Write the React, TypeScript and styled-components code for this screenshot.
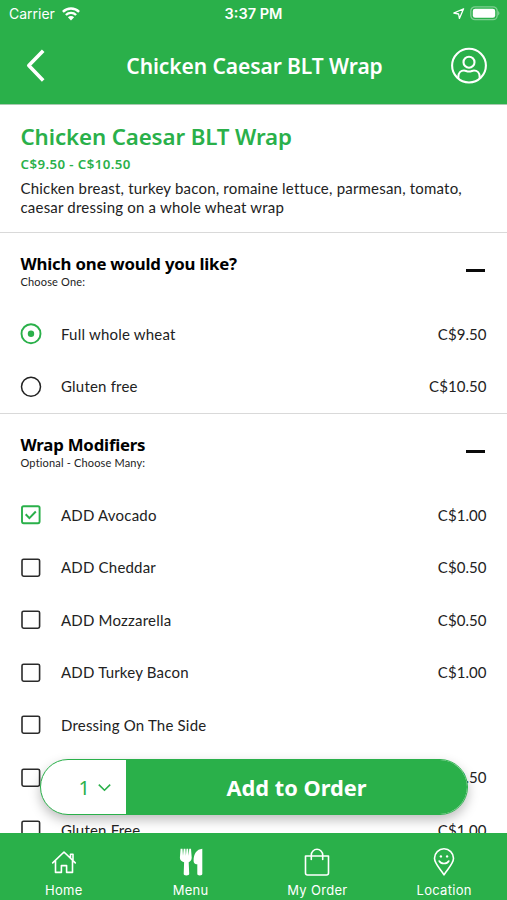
import React from 'react';
import styled, { createGlobalStyle } from 'styled-components';

const GREEN = '#2ab04a';
const BODY = 'Lato, "Noto Sans", sans-serif';
const HEADING = '"Noto Sans", "Open Sans", sans-serif';
const SYSTEM = 'Inter, "Liberation Sans", sans-serif';

const Global = createGlobalStyle`
  *, *::before, *::after { box-sizing: border-box; }
  body { margin: 0; background: #fff; }
  button { border: 0; padding: 0; background: none; color: inherit; font: inherit; }
  svg { display: block; flex: none; }
`;

const Screen = styled.div`
  position: relative;
  display: flex;
  flex-direction: column;
  width: 507px;
  height: 900px;
  overflow: hidden;
  background: #fff;
  color: #222;
  font-family: ${BODY};
`;

const Header = styled.header`
  flex: none;
  height: 105px;
  background: ${GREEN};
  border-bottom: 1px solid #a9c9b0;
  color: #fff;
`;

const StatusBar = styled.div`
  display: grid;
  grid-template-columns: 1fr auto 1fr;
  align-items: center;
  height: 27px;
  padding: 0 7px 0 9px;
  font-family: ${SYSTEM};
  font-size: 14px;
`;

const Carrier = styled.div`
  display: flex;
  align-items: center;
  gap: 7px;
`;

const Clock = styled.time`
  margin-right: 2px;
  font-weight: 600;
  font-size: 14.5px;
`;

const Indicators = styled.div`
  display: flex;
  align-items: center;
  justify-content: flex-end;
  gap: 5px;
`;

const NavBar = styled.div`
  display: grid;
  grid-template-columns: 44px 1fr 44px;
  align-items: center;
  height: 77px;
  padding: 0 16px 0 14px;
`;

const NavTitle = styled.h1`
  margin: 0 0 0 4px;
  text-align: center;
  font: 600 21px/28px ${HEADING};
  letter-spacing: -0.08px;
`;

const NavButton = styled.button`
  display: grid;
  place-items: center;
  width: 44px;
  height: 44px;
`;

const Content = styled.main`
  flex: 1;
  min-height: 0;
  overflow: hidden;
`;

const Intro = styled.section`
  height: 128px;
  padding: 17px 20px 0 20.5px;
  border-bottom: 1px solid #d9d9d9;
`;

const ItemName = styled.h2`
  margin: 0;
  color: ${GREEN};
  font: 600 22.3px/29px ${HEADING};
  letter-spacing: -0.12px;
`;

const PriceRange = styled.p`
  margin: 3px 0 5px;
  color: ${GREEN};
  font: 600 13.3px/20px ${HEADING};
  letter-spacing: 0.4px;
`;

const Description = styled.p`
  margin: 0;
  width: 450px;
  font-size: 15px;
  line-height: 19px;
  letter-spacing: 0.2px;
`;

const Group = styled.section`
  border-bottom: 1px solid #d9d9d9;
`;

const GroupHeader = styled.div`
  display: flex;
  justify-content: space-between;
  height: 75px;
  padding: 19px 22.5px 0 20.5px;
`;

const GroupTitle = styled.h3`
  margin: 0;
  color: #000;
  font: 700 16.8px/23px ${HEADING};
  letter-spacing: -0.2px;
`;

const GroupHint = styled.p`
  margin: 0;
  font-size: 11px;
  line-height: 13px;
  letter-spacing: 0.17px;
`;

const Collapse = styled.button`
  width: 19px;
  height: 3px;
  margin-top: 17px;
  background: #0a0a0a;
`;

const Row = styled.label`
  display: flex;
  align-items: center;
  height: 52.5px;
  padding: 0 20.5px 0 20px;
  font-size: 15px;
  letter-spacing: 0.2px;
`;

const Name = styled.span`
  flex: 1;
  padding: 0 0 1px 19px;
`;

const Price = styled.span`
  padding-bottom: 1px;
  letter-spacing: 0.05px;
`;

const OrderBar = styled.div`
  position: absolute;
  left: 40px;
  top: 759px;
  display: flex;
  width: 428px;
  height: 56px;
  overflow: hidden;
  border: 1px solid ${GREEN};
  border-radius: 28px;
  background: #fff;
  box-shadow: 0 5px 12px rgba(0, 0, 0, 0.26);
`;

const Quantity = styled.button`
  display: flex;
  align-items: center;
  justify-content: flex-end;
  gap: 8px;
  width: 85px;
  padding: 1px 15px 0 0;
  color: ${GREEN};
  font-family: ${HEADING};
  font-size: 20px;
`;

const AddButton = styled.button`
  flex: 1;
  padding-top: 1px;
  background: ${GREEN};
  color: #fff;
  font: 700 21.8px/30px ${HEADING};
`;

const TabBar = styled.nav`
  position: relative;
  flex: none;
  display: grid;
  grid-template-columns: repeat(4, 1fr);
  height: 67px;
  background: ${GREEN};
  color: #fff;
`;

const Tab = styled.a`
  display: flex;
  flex-direction: column;
  align-items: center;
  padding: 14px 0 0 1px;
  font: 400 13px/18px ${SYSTEM};
  letter-spacing: 0.3px;
`;

const TabIcon = styled.span`
  display: grid;
  place-items: center;
  height: 30px;
  margin-bottom: 4px;
`;

function RadioMark({ on }: { on?: boolean }) {
  return (
    <svg width="22" height="22" viewBox="0 0 22 22" fill="none">
      <circle cx="11" cy="10.7" r="9.5" stroke={on ? GREEN : '#222'} strokeWidth={on ? 1.9 : 1.5} />
      {on && <circle cx="11" cy="10.7" r="3.2" fill={GREEN} />}
    </svg>
  );
}

function CheckMark({ on }: { on?: boolean }) {
  return (
    <svg width="22" height="22" viewBox="0 0 22 22" fill="none" stroke={on ? GREEN : '#2b2b2b'}>
      <rect x="2" y="2.2" width="17.6" height="17" rx="1.6" strokeWidth={on ? 1.9 : 1.6} />
      {on && <path d="M5.7 10.2l3.7 3.9 6.4-6.6" strokeWidth="2" />}
    </svg>
  );
}

const wraps = [
  { name: 'Full whole wheat', price: 'C$9.50', on: true },
  { name: 'Gluten free', price: 'C$10.50' },
];

const modifiers = [
  { name: 'ADD Avocado', price: 'C$1.00', on: true },
  { name: 'ADD Cheddar', price: 'C$0.50' },
  { name: 'ADD Mozzarella', price: 'C$0.50' },
  { name: 'ADD Turkey Bacon', price: 'C$1.00' },
  { name: 'Dressing On The Side', price: '' },
  { name: '', price: 'C$0.50' },
  { name: 'Gluten Free', price: 'C$1.00' },
];

const line = { fill: 'none', stroke: '#fff', strokeWidth: 1.6 };

const tabs = [
  {
    label: 'Home',
    icon: (
      <svg width="26" height="26" viewBox="0 0 26 26" {...line} strokeLinejoin="round" strokeLinecap="round">
        <path d="M1.7 13.9L13 3l11.3 10.9M4.5 11.5V23.4h5.900v-6.800h5.200v6.800h5.900V11.500M19.500 9V5.200h2.500v6" />
      </svg>
    ),
  },
  {
    label: 'Menu',
    icon: (
      <svg width="24" height="28" viewBox="0 0 24 28" fill="#fff">
        <path d="M1.600.8h1.900l.5 7 .7-7h1.700l.5 7 .6-7h1.600l.6 7 .5-7h1.800l.7 8.700c0 2.400-1.200 3.900-3 4.700l.5 11.600c0 1-.9 1.700-2.800 1.700s-2.700-.7-2.700-1.700l.4-11.600C2.300 13.400.9 11.900.9 9.500z" />
        <path d="M23.300.8v25c0 1.200-.8 1.700-2.500 1.700s-2.500-.6-2.500-1.700v-9.600h-1.200c-1.700-.2-2.500-1.500-2.500-3.600 0-6.700 3.100-11.300 8.700-11.800z" />
      </svg>
    ),
  },
  {
    label: 'My Order',
    icon: (
      <svg width="26" height="28" viewBox="0 0 26 28" {...line}>
        <path d="M1.500 8h23v17a2 2 0 0 1-2 2h-19a2 2 0 0 1-2-2z" strokeLinejoin="round" />
        <path d="M7.300 11.500V7a5.700 5.700 0 0 1 11.400 0v4.500" strokeLinecap="round" />
      </svg>
    ),
  },
  {
    label: 'Location',
    icon: (
      <svg width="24" height="28" viewBox="0 0 24 28" {...line}>
        <path d="M12 26.800C9 21.500 2.500 16 2.500 10.300a9.500 9.500 0 0 1 19 0C21.500 16 15 21.500 12 26.800z" strokeLinejoin="round" />
        <path d="M7.200 13c1.900 3.400 7.700 3.400 9.600 0" strokeLinecap="round" />
        <circle cx="8.900" cy="8.400" r="1.200" fill="#fff" stroke="none" />
        <circle cx="15.100" cy="8.400" r="1.200" fill="#fff" stroke="none" />
      </svg>
    ),
  },
];

export default function App() {
  return (
    <Screen>
      <Global />
      <Header>
        <StatusBar>
          <Carrier>
            Carrier
            <svg width="18" height="14" viewBox="0 0 18 14" fill="none" stroke="#fff" strokeWidth="2.400">
              <path d="M.9 4.900a11.500 11.500 0 0 1 16.200 0M3.900 8a7.300 7.300 0 0 1 10.200 0" />
              <path d="M9 13.500L5.900 10.300a4.400 4.400 0 0 1 6.200 0z" fill="#fff" stroke="none" />
            </svg>
          </Carrier>
          <Clock>3:37 PM</Clock>
          <Indicators>
            <svg width="13" height="13" viewBox="0 0 13 13" fill="none" stroke="#fff" strokeWidth="1.300" strokeLinejoin="round">
              <path d="M11.600 1.800L1.800 6l4.800 1 .8 4.400z" />
            </svg>
            <svg width="30" height="15" viewBox="0 0 30 15" fill="none">
              <rect x=".8" y=".8" width="26.400" height="12.900" rx="4.200" stroke="#fff" strokeOpacity=".4" strokeWidth="1.300" />
              <rect x="2.800" y="2.700" width="22.400" height="9.100" rx="2.400" fill="#fff" />
              <path d="M28.300 5c1.400.7 1.400 3.800 0 4.500z" fill="#fff" fillOpacity=".5" />
            </svg>
          </Indicators>
        </StatusBar>
        <NavBar>
          <NavButton aria-label="Back">
            <svg width="20" height="34" viewBox="0 0 20 34" fill="none" stroke="#fff" strokeWidth="3.600">
              <path d="M17.200 1.800L2.800 16.600 17.200 31.500" strokeLinejoin="round" />
            </svg>
          </NavButton>
          <NavTitle>Chicken Caesar BLT Wrap</NavTitle>
          <NavButton aria-label="Account">
            <svg width="38" height="38" viewBox="0 0 38 38" fill="none" stroke="#fff" strokeWidth="2.100">
              <circle cx="19" cy="18.600" r="16.900" />
              <circle cx="19" cy="15.200" r="5.500" />
              <path d="M8.300 31.500v-1.500c0-4 2.600-6.500 5.700-6.500 1.700 0 2.700 1 5 1s3.300-1 5-1c3.100 0 5.700 2.500 5.700 6.500v1.500" />
            </svg>
          </NavButton>
        </NavBar>
      </Header>

      <Content>
        <Intro>
          <ItemName>Chicken Caesar BLT Wrap</ItemName>
          <PriceRange>C$9.50 - C$10.50</PriceRange>
          <Description>
            Chicken breast, turkey bacon, romaine lettuce, parmesan, tomato, caesar dressing on a whole wheat wrap
          </Description>
        </Intro>

        <Group>
          <GroupHeader>
            <div>
              <GroupTitle>Which one would you like?</GroupTitle>
              <GroupHint>Choose One:</GroupHint>
            </div>
            <Collapse aria-label="Collapse" />
          </GroupHeader>
          {wraps.map((w) => (
            <Row key={w.name}>
              <RadioMark on={w.on} />
              <Name>{w.name}</Name>
              <Price>{w.price}</Price>
            </Row>
          ))}
        </Group>

        <Group>
          <GroupHeader>
            <div>
              <GroupTitle>Wrap Modifiers</GroupTitle>
              <GroupHint>Optional - Choose Many:</GroupHint>
            </div>
            <Collapse aria-label="Collapse" />
          </GroupHeader>
          {modifiers.map((m, i) => (
            <Row key={i}>
              <CheckMark on={m.on} />
              <Name>{m.name}</Name>
              <Price>{m.price}</Price>
            </Row>
          ))}
        </Group>
      </Content>

      <OrderBar>
        <Quantity>
          1
          <svg width="13" height="9" viewBox="0 0 13 9" fill="none" stroke={GREEN} strokeWidth="1.600">
            <path d="M.8 1.600l5.700 5.600 5.700-5.600" />
          </svg>
        </Quantity>
        <AddButton>Add to Order</AddButton>
      </OrderBar>

      <TabBar>
        {tabs.map((t) => (
          <Tab key={t.label}>
            <TabIcon>{t.icon}</TabIcon>
            {t.label}
          </Tab>
        ))}
      </TabBar>
    </Screen>
  );
}
